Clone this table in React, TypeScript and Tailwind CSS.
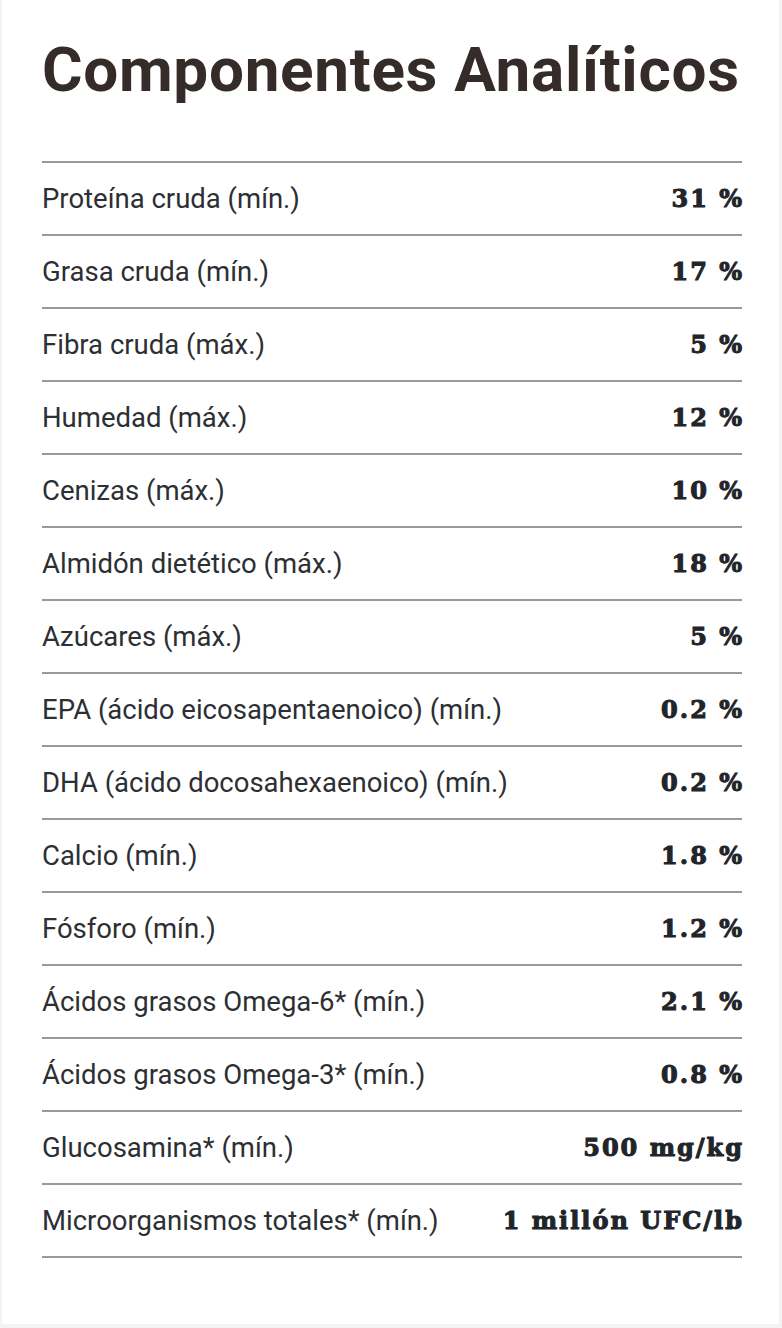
const rows: [string, string][] = [
  ['Proteína cruda (mín.)', '31 %'],
  ['Grasa cruda (mín.)', '17 %'],
  ['Fibra cruda (máx.)', '5 %'],
  ['Humedad (máx.)', '12 %'],
  ['Cenizas (máx.)', '10 %'],
  ['Almidón dietético (máx.)', '18 %'],
  ['Azúcares (máx.)', '5 %'],
  ['EPA (ácido eicosapentaenoico) (mín.)', '0.2 %'],
  ['DHA (ácido docosahexaenoico) (mín.)', '0.2 %'],
  ['Calcio (mín.)', '1.8 %'],
  ['Fósforo (mín.)', '1.2 %'],
  ['Ácidos grasos Omega-6* (mín.)', '2.1 %'],
  ['Ácidos grasos Omega-3* (mín.)', '0.8 %'],
  ['Glucosamina* (mín.)', '500 mg/kg'],
  ['Microorganismos totales* (mín.)', '1 millón UFC/lb'],
];

export default function App() {
  return (
    <div className="min-h-screen w-full bg-[#f3f3f3] pl-[2px]">
      <div className="w-[777px] h-[1324px] bg-white pl-[40px] pt-[39px]">
        {/* Title */}
        <h2 className="w-[700px] whitespace-nowrap text-[62px] leading-[62px] font-bold tracking-[0.7px] text-[#352b29] font-['Roboto',sans-serif]">
          Componentes Analíticos
        </h2>

        {/* Table */}
        <div className="mt-[60px] w-[700px] border-t-2 border-[#9c9899]">
          {rows.map(([label, value]) => (
            <div
              key={label}
              className="flex h-[73px] items-center justify-between border-b-2 border-[#9c9899]"
            >
              <span className="whitespace-nowrap text-[27.5px] text-[#2c2f33] font-['Roboto',sans-serif]">
                {label}
              </span>
              <span className="-mr-[2px] whitespace-nowrap text-[24px] font-bold tracking-[2px] text-[#212429] [-webkit-text-stroke:1px_#212429] font-['DejaVu_Serif',serif]">
                {value}
              </span>
            </div>
          ))}
        </div>
      </div>
    </div>
  );
}
